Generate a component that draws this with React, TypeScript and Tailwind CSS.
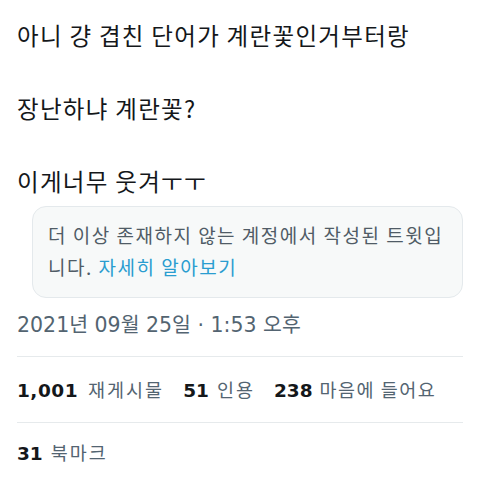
export default function App() {
  const font = { fontFamily: '"DejaVu Sans", "Noto Sans CJK KR", sans-serif' };
  const kr = { fontFamily: '"Noto Sans CJK KR", sans-serif' };

  return (
    <div className="w-[480px] h-[482px] bg-white overflow-hidden px-[17px] pt-[17px]" style={font}>
      {/* tweet body */}
      <div className="flex flex-col gap-[37px] text-[23.5px] leading-[36px] tracking-[1.3px] text-[#14171a]" style={kr}>
        <p>아니 걍 겹친 단어가 계란꽃인거부터랑</p>
        <p>장난하냐 계란꽃?</p>
        <p>이게너무 웃겨ㅜㅜ</p>
      </div>

      {/* deleted account notice */}
      <div
        className="mt-[7px] ml-[15px] rounded-[14px] border border-[#e4e9ec] bg-[#f7f9f9] px-[15px] pt-[12px] pb-[14px] text-[19px] leading-[32px] tracking-[1.5px] text-[#505c66]"
        style={kr}
      >
        더 이상 존재하지 않는 계정에서 작성된 트윗입
        <br />
        니다. <span className="text-[#2a9dd0]">자세히 알아보기</span>
      </div>

      {/* timestamp */}
      <div className="mt-[13px] text-[20.5px] leading-[28px] text-[#536471]">
        2021년 09월 25일 · 1:53 오후
      </div>

      {/* stats */}
      <div className="mt-[17px] border-t border-[#e6eaec]">
        <div className="flex items-center gap-[19px] pt-[19px] pb-[18px] text-[18.5px] leading-[26px]">
          <span className="flex items-baseline">
            <b className="font-bold text-[#14171a] tracking-[0.5px]">1,001</b>
            <span className="ml-[10px] text-[#536471] tracking-[2px]" style={kr}>재게시물</span>
          </span>
          <span className="flex items-baseline">
            <b className="font-bold text-[#14171a]">51</b>
            <span className="ml-[8px] text-[#536471] tracking-[2px]" style={kr}>인용</span>
          </span>
          <span className="flex items-baseline">
            <b className="font-bold text-[#14171a]">238</b>
            <span className="ml-[7px] text-[#536471] tracking-[1.5px]" style={kr}>마음에 들어요</span>
          </span>
        </div>
      </div>

      <div className="border-t border-[#e6eaec]">
        <div className="flex items-baseline pt-[16px] text-[18.5px] leading-[26px]">
          <b className="font-bold text-[#14171a]">31</b>
          <span className="ml-[8px] text-[#536471] tracking-[2px]" style={kr}>북마크</span>
        </div>
      </div>
    </div>
  );
}
